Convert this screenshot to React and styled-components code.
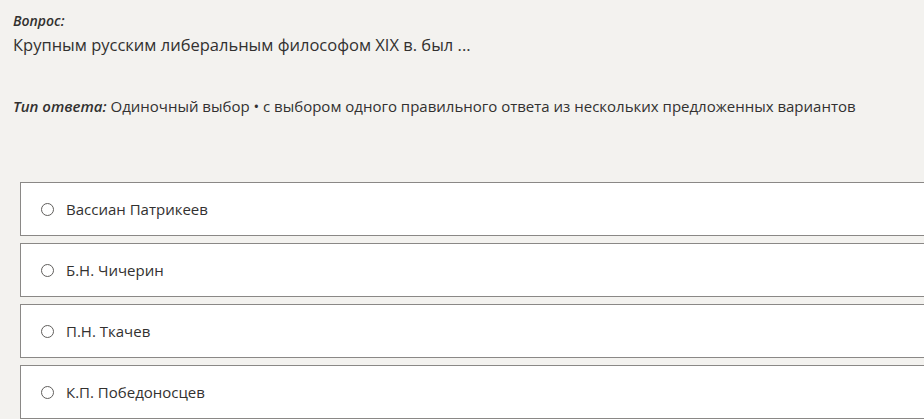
import React from 'react'
import styled, { createGlobalStyle } from 'styled-components'

const GlobalStyle = createGlobalStyle`
  html, body {
    margin: 0;
    padding: 0;
    background: #f3f2ef;
  }
  body {
    font-family: "Open Sans", "Noto Sans", sans-serif;
    color: #323130;
  }
`

const Page = styled.div`
  padding: 11px 0 0 13px;
  height: 419px;
  box-sizing: border-box;
  overflow: hidden;
`

const Label = styled.div`
  font-size: 14px;
  font-weight: 600;
  font-style: italic;
  line-height: 20px;
`

const QuestionText = styled.div`
  font-size: 16.5px;
  line-height: 27px;
`

const TypeLine = styled.div`
  margin-top: 36px;
  font-size: 15px;
  line-height: 24px;
  b {
    font-weight: 600;
    font-style: italic;
  }
`

const Options = styled.div`
  margin: 64px -40px 0 7px;
  display: flex;
  flex-direction: column;
  gap: 7px;
`

const Option = styled.label`
  display: flex;
  align-items: center;
  height: 52px;
  background: #fff;
  border: 1px solid #8a8886;
  padding-left: 20px;
  font-size: 15px;
  cursor: pointer;
`

const Radio = styled.span`
  width: 11px;
  height: 11px;
  border: 1px solid #605e5c;
  border-radius: 50%;
  margin-right: 12px;
  flex-shrink: 0;
`

const answers = [
  'Вассиан Патрикеев',
  'Б.Н. Чичерин',
  'П.Н. Ткачев',
  'К.П. Победоносцев',
]

export default function App() {
  return (
    <Page>
      <GlobalStyle />
      <Label>Вопрос:</Label>
      <QuestionText>Крупным русским либеральным философом XIX в. был ...</QuestionText>
      <TypeLine>
        <b>Тип ответа:</b> Одиночный выбор • с выбором одного правильного ответа из нескольких предложенных вариантов
      </TypeLine>
      <Options>
        {answers.map((a) => (
          <Option key={a}>
            <Radio />
            {a}
          </Option>
        ))}
      </Options>
    </Page>
  )
}
